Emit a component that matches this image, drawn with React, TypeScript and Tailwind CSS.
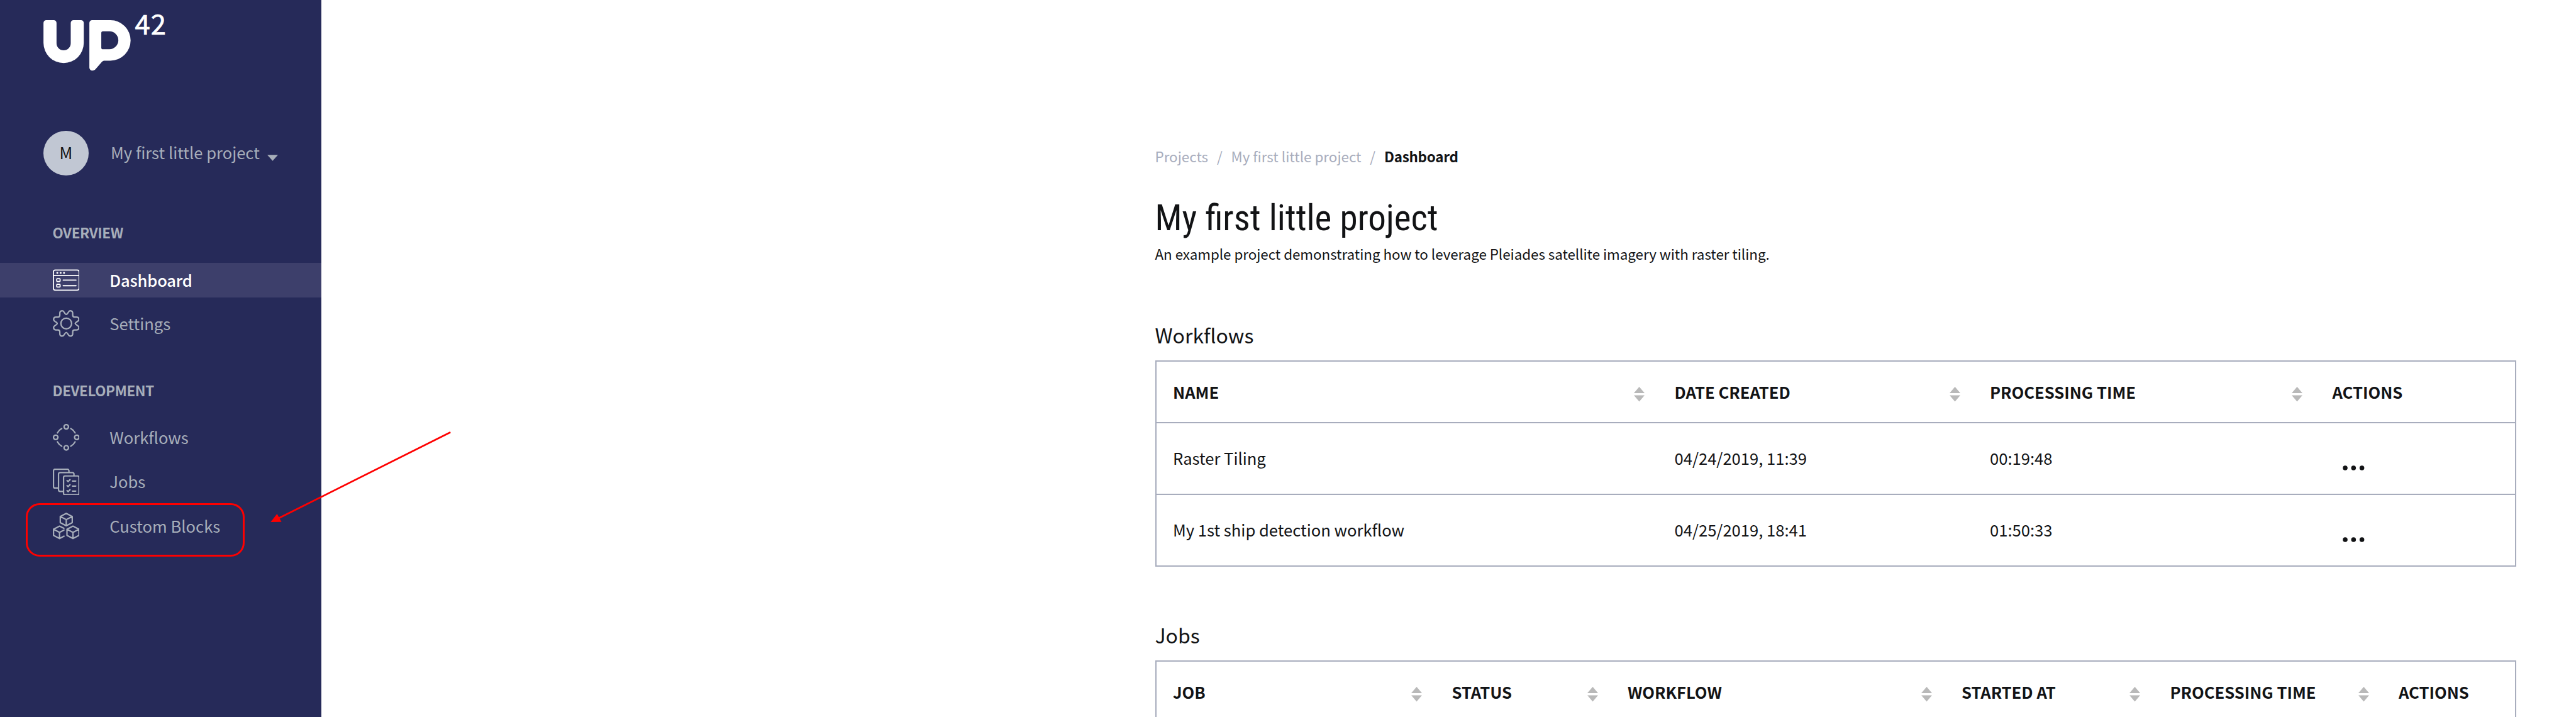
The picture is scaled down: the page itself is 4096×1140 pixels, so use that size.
import React, { type ReactNode } from 'react';

function Logo() {
  return (
    <svg viewBox="70 0 240 136" className="block h-[121px] w-[213.600px] text-white" fill="currentColor" aria-label="UP42">
      <path d="M83 36h13.300a5 5 0 0 1 5 5v36.300a12.700 12.700 0 0 0 25.400 0V41a5 5 0 0 1 5-5H145a5 5 0 0 1 5 5v35.700a36 36 0 0 1-72 0V41a5 5 0 0 1 5-5Z" />
      <path
        fillRule="evenodd"
        d="M165 36h32.500a36.200 36.200 0 0 1 0 72.400H187.500c-2.500 0-3.600.6-5 2.100l-11 12.700c-1.800 2-3.600 2.900-6 2.900a5.300 5.300 0 0 1-5.500-5.300V41a5 5 0 0 1 5-5ZM184.300 56a3 3 0 0 0-3 3v26a3 3 0 0 0 3 3h11.500a16 16 0 0 0 0-32Z"
      />
      <text
        x="241.500"
        y="62.300"
        className="font-['Noto_Sans_CJK_SC',sans-serif] text-[49px] tracking-[1px]"
        stroke="currentColor"
        strokeWidth="0.800"
        strokeLinejoin="round"
      >
        42
      </text>
    </svg>
  );
}

function Icon({ children }: { children: ReactNode }) {
  return (
    <svg
      viewBox="0 0 48 48"
      className="h-[42.700px] w-[42.700px] shrink-0"
      fill="none"
      stroke="currentColor"
      strokeWidth="2.500"
      strokeLinecap="round"
      strokeLinejoin="round"
    >
      {children}
    </svg>
  );
}

function DashboardIcon() {
  return (
    <Icon>
      <g strokeWidth="2">
        <rect x="1" y="6" width="46" height="36" rx="3.500" />
        <path d="M1 16h46M18.500 24h23M18.500 34h23" />
        <rect x="7" y="21.500" width="6" height="5" rx="1" />
        <rect x="7" y="31.500" width="6" height="5" rx="1" />
      </g>
      <g fill="currentColor" stroke="none">
        <circle cx="8" cy="11" r="1.700" />
        <circle cx="14" cy="11" r="1.700" />
        <circle cx="20" cy="11" r="1.700" />
      </g>
    </Icon>
  );
}

const GEAR_QUARTER =
  'M24 7.800C26 7.800 26.500 5.500 28 3.500C30.300 0 35.500 1 35.500 5.500V9C35.500 11 37 12.500 39 12.500H42.500C47 12.500 48 17.700 44.500 20C42.500 21.500 40.200 22 40.200 24';

function SettingsIcon() {
  return (
    <Icon>
      <path d={GEAR_QUARTER} />
      <path d={GEAR_QUARTER} transform="rotate(90 24 24)" />
      <path d={GEAR_QUARTER} transform="rotate(180 24 24)" />
      <path d={GEAR_QUARTER} transform="rotate(270 24 24)" />
      <circle cx="24" cy="24" r="9.600" />
    </Icon>
  );
}

function WorkflowsIcon() {
  return (
    <Icon>
      <circle cx="24" cy="5.200" r="4" />
      <circle cx="42.800" cy="24" r="4" />
      <circle cx="24" cy="42.800" r="4" />
      <circle cx="5.200" cy="24" r="4" />
      <path d="M32 8.200A18.500 18.500 0 0 1 39.800 16M39.800 32A18.500 18.500 0 0 1 32 39.800M16 39.800A18.500 18.500 0 0 1 8.200 32M8.200 16A18.500 18.500 0 0 1 16 8.200" />
    </Icon>
  );
}

function JobsIcon() {
  return (
    <Icon>
      <rect x="19.200" y="13.200" width="27.600" height="33.600" rx="2.500" />
      <path d="M37.800 12.500V10a2.800 2.800 0 0 0-2.800-2.800H13A2.800 2.800 0 0 0 10.200 10v28a2.800 2.800 0 0 0 2.800 2.800h5.500" />
      <path d="M28.800 6.500V4A2.800 2.800 0 0 0 26 1.200H4A2.800 2.800 0 0 0 1.200 4v28A2.800 2.800 0 0 0 4 34.800h5.500" />
      <path d="M25.500 21.500l1.800 1.800 3.400-3.500M25.500 30.500l1.800 1.800 3.400-3.500M25.500 39.500l1.800 1.800 3.400-3.500M35 22.300h6M35 31.300h6M35 40.300h6" />
    </Icon>
  );
}

function BlocksIcon() {
  return (
    <Icon>
      <path d="M24 1.400L34.700 7V18L24 23.600L13.300 18V7ZM13.300 7L24 12.500L34.700 7M24 12.500V23.600" />
      <path d="M36 24.200L46.700 29.800V40.800L36 46.400L25.300 40.800V29.800ZM25.300 29.800L36 35.300L46.700 29.800M36 35.300V46.400" />
      <path d="M19.800 28L12 24.200L1.300 29.800V40.800L12 46.400L20 42.200M1.300 29.800L12 35.300L20 31.200M12 35.300V46.400" />
    </Icon>
  );
}

function NavItem({ icon, label, active = false }: { icon: ReactNode; label: string; active?: boolean }) {
  return (
    <a
      className={
        active
          ? 'flex h-[55px] items-center gap-[48px] bg-[#3d3f6b] pl-[83.600px] font-medium tracking-[-0.2px] text-white'
          : 'flex h-[55px] items-center gap-[48px] pl-[83.600px]'
      }
    >
      {icon}
      <span className="pb-[2px] text-[25.600px] leading-[36px]">{label}</span>
    </a>
  );
}

function NavHeading({ children }: { children: ReactNode }) {
  return (
    <h2 className="pl-[83.500px] text-[22.400px] leading-[32px] font-bold tracking-[-0.35px]">{children}</h2>
  );
}

function Sidebar() {
  return (
    <aside className="h-full w-[511px] shrink-0 bg-[#262a59] text-[#a7aeba]">
      <div className="pl-[62px]">
        <Logo />
      </div>
      <div className="mt-[87px] flex h-[71px] items-center pl-[69.400px]">
        <div className="flex h-[71.200px] w-[71.200px] items-center justify-center rounded-full bg-[#c1c7d3] pb-[4px] text-[25.600px] leading-[36px] text-[#121315]">
          M
        </div>
        <span className="ml-[35.500px] pb-[4px] text-[25.600px] leading-[36px]">My first little project</span>
        <svg viewBox="0 0 18 10" className="mt-[14px] ml-[12.500px] h-[10px] w-[17px]" fill="currentColor">
          <path d="M0 0h18L9 10Z" />
        </svg>
      </div>
      <div className="mt-[74px]">
        <NavHeading>OVERVIEW</NavHeading>
      </div>
      <nav className="mt-[33px] flex flex-col gap-[14px]">
        <NavItem icon={<DashboardIcon />} label="Dashboard" active />
        <NavItem icon={<SettingsIcon />} label="Settings" />
      </nav>
      <div className="mt-[62px]">
        <NavHeading>DEVELOPMENT</NavHeading>
      </div>
      <nav className="mt-[32px] flex flex-col gap-[15.500px]">
        <NavItem icon={<WorkflowsIcon />} label="Workflows" />
        <NavItem icon={<JobsIcon />} label="Jobs" />
        <NavItem icon={<BlocksIcon />} label="Custom Blocks" />
      </nav>
    </aside>
  );
}

function SortIcon() {
  return (
    <svg viewBox="0 0 17 24" className="mt-[7px] h-[24px] w-[17px] shrink-0" fill="#b9b9b9">
      <path d="M8.500 0L17 10H0ZM0 13.500H17L8.500 23.500Z" />
    </svg>
  );
}

function HeaderCell({ label, sortable = true }: { label: string; sortable?: boolean }) {
  return (
    <div className="flex h-[96px] items-center justify-between pr-[21px] pl-[26.500px]">
      <span className="pb-px text-[25.600px] leading-[36px] font-bold whitespace-nowrap">{label}</span>
      {sortable && <SortIcon />}
    </div>
  );
}

function Cell({ children }: { children: ReactNode }) {
  return (
    <div className="flex h-[112px] items-center pb-[3px] pl-[26.500px] text-[25.600px] leading-[36px] whitespace-nowrap">
      {children}
    </div>
  );
}

function MoreButton() {
  return (
    <button className="mt-[33px] ml-[16px]" aria-label="Actions">
      <svg viewBox="0 0 35 8" className="block h-[8px] w-[35px]" fill="currentColor">
        <circle cx="4" cy="4" r="3.800" />
        <circle cx="17.300" cy="4" r="3.800" />
        <circle cx="30.600" cy="4" r="3.800" />
      </svg>
    </button>
  );
}

const WORKFLOWS = [
  { name: 'Raster Tiling', created: '04/24/2019, 11:39', time: '00:19:48' },
  { name: 'My 1st ship detection workflow', created: '04/25/2019, 18:41', time: '01:50:33' },
];

function WorkflowsTable() {
  return (
    <div className="mt-[21px] w-[2164px] divide-y-2 divide-[#a8adbd] border-2 border-[#a8adbd]">
      <div className="grid grid-cols-[797.500px_501.500px_544.500px_1fr]">
        <HeaderCell label="NAME" />
        <HeaderCell label="DATE CREATED" />
        <HeaderCell label="PROCESSING TIME" />
        <HeaderCell label="ACTIONS" sortable={false} />
      </div>
      {WORKFLOWS.map((w) => (
        <div key={w.name} className="grid grid-cols-[797.500px_501.500px_544.500px_1fr]">
          <Cell>{w.name}</Cell>
          <Cell>{w.created}</Cell>
          <Cell>{w.time}</Cell>
          <Cell>
            <MoreButton />
          </Cell>
        </div>
      ))}
    </div>
  );
}

function JobsTable() {
  return (
    <div className="mt-[21px] h-[120px] w-[2164px] border-2 border-[#a8adbd]">
      <div className="grid grid-cols-[443.500px_279.500px_531px_331.500px_363.500px_1fr]">
        <HeaderCell label="JOB" />
        <HeaderCell label="STATUS" />
        <HeaderCell label="WORKFLOW" />
        <HeaderCell label="STARTED AT" />
        <HeaderCell label="PROCESSING TIME" />
        <HeaderCell label="ACTIONS" sortable={false} />
      </div>
    </div>
  );
}

function Annotation() {
  return (
    <>
      <div className="pointer-events-none absolute top-[800px] left-[41px] h-[85px] w-[348px] rounded-[22px] border-3 border-[#fe0000]" />
      <svg viewBox="0 0 300 160" className="pointer-events-none absolute top-[680px] left-[425px] h-[160px] w-[300px]">
        <path d="M291.300 7.200L15 145.500" stroke="#fe0000" strokeWidth="2.700" />
        <path d="M5.400 150L15.500 136.900L22.600 149.700Z" fill="#fe0000" />
      </svg>
    </>
  );
}

export default function App() {
  return (
    <div className="relative flex h-[1140px] w-[4096px] overflow-hidden bg-white font-['Noto_Sans_CJK_SC','Noto_Sans',sans-serif] text-[#121315]">
      <Sidebar />
      <main className="pt-[232px] pl-[1325.500px]">
        <div className="flex gap-[13.800px] text-[22.400px] leading-[32px] text-[#a8adbd]">
          <span>Projects</span>
          <span>/</span>
          <span>My first little project</span>
          <span>/</span>
          <span className="font-bold tracking-[-0.25px] text-[#121315]">Dashboard</span>
        </div>
        <h1 className="mt-[51px] font-['Roboto_Condensed',Roboto,sans-serif] text-[57px] leading-[64px]">
          My first little project
        </h1>
        <p className="mt-[8px] text-[22.400px] leading-[32px] tracking-[-0.045px]">
          An example project demonstrating how to leverage Pleiades satellite imagery with raster tiling.
        </p>
        <h2 className="mt-[93px] text-[32px] leading-[40px]">Workflows</h2>
        <WorkflowsTable />
        <h2 className="mt-[88px] text-[32px] leading-[40px]">Jobs</h2>
        <JobsTable />
      </main>
      <Annotation />
    </div>
  );
}
